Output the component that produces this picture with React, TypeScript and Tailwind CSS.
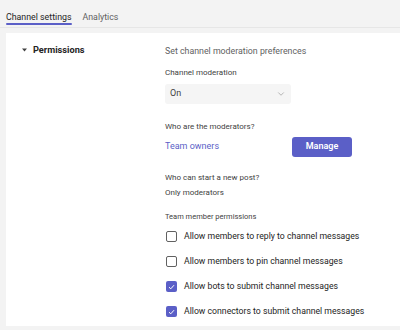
import { ChevronDown } from "lucide-react";

const font = { fontFamily: 'Roboto, "Liberation Sans", sans-serif' };

function Check({ on, label }: { on: boolean; label: string }) {
  return (
    <div className="flex h-[25px] items-center">
      {on ? (
        <span className="flex h-[11px] w-[11px] items-center justify-center rounded-[2px] bg-[#5b5fc7]">
          <svg width="7" height="6" viewBox="0 0 7 6" fill="none">
            <path d="M1 3.2 L2.8 4.8 L6 1.2" stroke="white" strokeWidth="1" />
          </svg>
        </span>
      ) : (
        <span className="h-[11px] w-[11px] rounded-[2px] border border-[#616161]" />
      )}
      <span className="ml-[7px] text-[8.7px] text-[#242424]">{label}</span>
    </div>
  );
}

export default function App() {
  return (
    <main className="h-[330px] w-[400px] overflow-hidden bg-[#f3f3f3]" style={font}>
      {/* tabs */}
      <div className="flex h-[28px] gap-[11px] border-b border-[#e6e6e6] pl-[6px] pt-[11px]">
        <div className="flex flex-col">
          <span className="text-[8.8px] leading-[12px] text-[#242424]">Channel settings</span>
          <span className="h-[2px] rounded-full bg-[#5b5fc7]" />
        </div>
        <div className="text-[8.8px] leading-[12px] text-[#616161]">Analytics</div>
      </div>

      {/* card */}
      <div className="ml-[6px] mt-[5px] h-[293px] bg-white">
        <div className="flex pt-[11px]">
          <div className="flex w-[159px] shrink-0 items-start pl-[16px]">
            <svg width="5" height="4" viewBox="0 0 5 4" className="mt-[4px]">
              <path d="M0 0.5 L5 0.5 L2.5 3.5 Z" fill="#424242" />
            </svg>
            <span className="ml-[6px] text-[9.2px] font-bold leading-[12px] text-[#242424]">Permissions</span>
          </div>

          <div className="flex flex-col">
            <div className="text-[8.8px] leading-[14px] text-[#616161]">Set channel moderation preferences</div>

            <div className="mt-[8px] text-[8px] leading-[14px] text-[#424242]">Channel moderation</div>
            <div className="mt-[4px] flex h-[20px] w-[126px] items-center justify-between rounded-[3px] bg-[#f5f5f5] px-[5px]">
              <span className="text-[9px] text-[#424242]">On</span>
              <ChevronDown size={10} strokeWidth={1.2} className="text-[#757575]" />
            </div>

            <div className="mt-[16px] text-[8px] leading-[14px] text-[#424242]">Who are the moderators?</div>
            <div className="mt-[3px] flex h-[20px] items-center">
              <span className="w-[127px] text-[9px] text-[#5b5fc7]">Team owners</span>
              <button className="h-[20px] w-[60px] rounded-[3px] bg-[#5b5fc7] text-[9px] font-semibold text-white">
                Manage
              </button>
            </div>

            <div className="mt-[14px] text-[8px] leading-[14px] text-[#424242]">Who can start a new post?</div>
            <div className="mt-[1px] text-[8px] leading-[14px] text-[#424242]">Only moderators</div>

            <div className="mt-[10px] text-[7.5px] leading-[14px] text-[#424242]">Team member permissions</div>
            <div className="pl-[1px]">
              <Check on={false} label="Allow members to reply to channel messages" />
              <Check on={false} label="Allow members to pin channel messages" />
              <Check on label="Allow bots to submit channel messages" />
              <Check on label="Allow connectors to submit channel messages" />
            </div>
          </div>
        </div>
      </div>
    </main>
  );
}
